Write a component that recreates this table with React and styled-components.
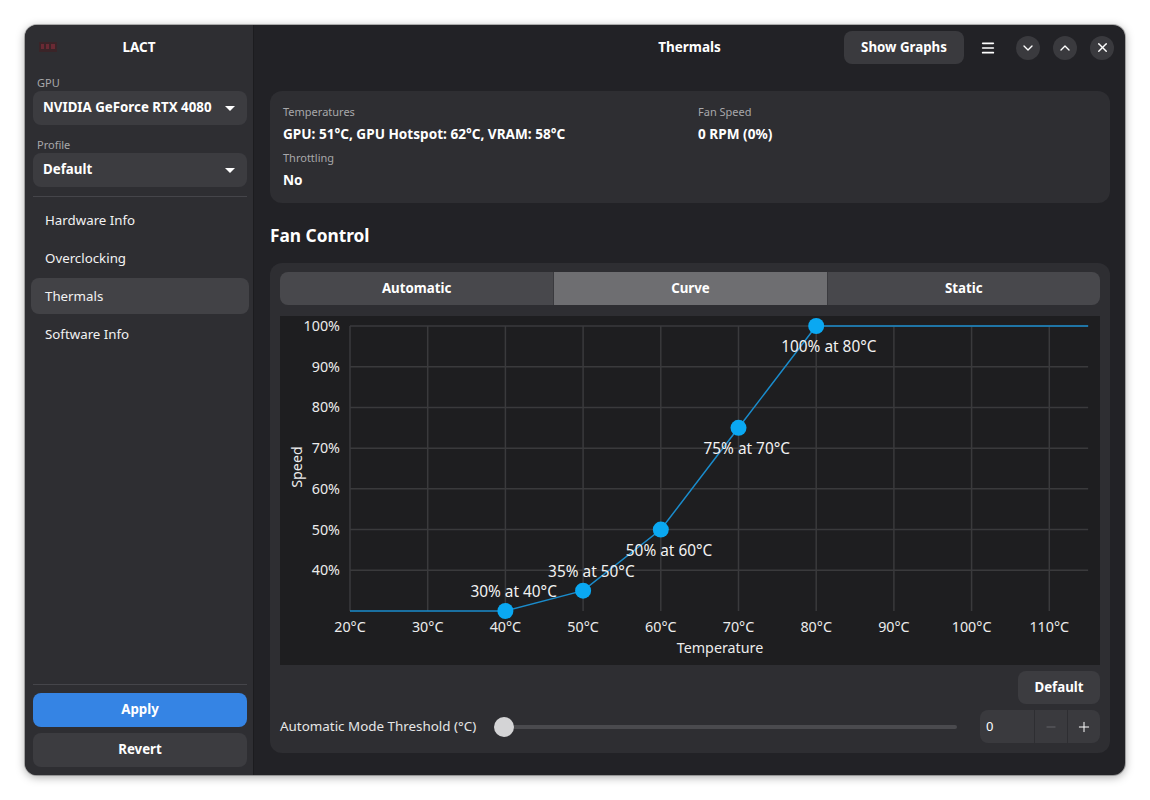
import React from 'react';
import styled, { createGlobalStyle } from 'styled-components';
import { ChevronDown, ChevronUp, X, Menu, Minus, Plus } from 'lucide-react';

const GlobalStyle = createGlobalStyle`
  html, body {
    margin: 0;
    padding: 0;
    background: #ffffff;
  }
  body {
    font-family: "Noto Sans", "Open Sans", sans-serif;
    color: #ffffff;
  }
  #root {
    padding: 25px;
  }
`

const Window = styled.div`
  width: 1100px;
  height: 750px;
  display: flex;
  border-radius: 12px;
  overflow: hidden;
  background: #222226;
  box-shadow: 0 2px 10px rgba(0, 0, 0, 0.35), 0 0 0 1px rgba(0, 0, 0, 0.25);
`

const Sidebar = styled.aside`
  width: 229px;
  flex-shrink: 0;
  display: flex;
  flex-direction: column;
  background: #2e2e32;
  border-right: 1px solid #1c1c1f;
  box-sizing: border-box;
`

const SideHeader = styled.div`
  height: 46px;
  display: flex;
  align-items: center;
  justify-content: center;
  position: relative;
  padding-bottom: 2px;
  box-sizing: border-box;
  font-size: 13.5px;
  font-weight: 700;
`

const Logo = styled.svg`
  position: absolute;
  left: 14px;
  top: 17px;
`

const SideSection = styled.div`
  padding: 4px 6px 0 8px;
  display: flex;
  flex-direction: column;
`

const FieldLabel = styled.div`
  font-size: 11px;
  color: #a8a8aa;
  height: 16px;
  line-height: 16px;
  padding-left: 4px;
  margin-top: ${p => p.$top || 0}px;
`

const Dropdown = styled.div`
  height: 34px;
  border-radius: 8px;
  background: #3c3c40;
  display: flex;
  align-items: center;
  justify-content: space-between;
  padding: 0 12px 2px 10px;
  box-sizing: border-box;
  font-size: 13.3px;
  font-weight: 700;
`

const Caret = styled.span`
  width: 0;
  height: 0;
  margin-top: 2px;
  border-left: 5px solid transparent;
  border-right: 5px solid transparent;
  border-top: 5px solid #ffffff;
`

const Separator = styled.div`
  height: 1px;
  background: #45454a;
  margin: ${p => p.$margin || '0'};
`

const NavList = styled.nav`
  display: flex;
  flex-direction: column;
  gap: 2px;
  padding: 5px 4px 0 6px;
`

const NavItem = styled.div`
  height: 36px;
  display: flex;
  align-items: center;
  padding-left: 14px;
  border-radius: 8px;
  font-size: 13.3px;
  color: #f2f2f2;
  background: ${p => (p.$active ? '#424246' : 'transparent')};
`

const Spacer = styled.div`
  flex: 1;
`

const SideFooter = styled.div`
  display: flex;
  flex-direction: column;
  gap: 6px;
  padding: 0 6px 8px 8px;
`

const WideButton = styled.button`
  height: 34px;
  border: none;
  border-radius: 8px;
  padding: 0 0 2px;
  font-family: inherit;
  font-size: 13.3px;
  font-weight: 700;
  color: #ffffff;
  background: ${p => (p.$primary ? '#3584e4' : '#3c3c40')};
`

const Main = styled.main`
  flex: 1;
  display: flex;
  flex-direction: column;
  min-width: 0;
`

const HeaderBar = styled.header`
  height: 46px;
  display: flex;
  align-items: center;
  justify-content: center;
  position: relative;
  font-size: 13.5px;
  font-weight: 700;
  padding-bottom: 2px;
  box-sizing: border-box;
`

const HeaderActions = styled.div`
  position: absolute;
  right: 11px;
  top: 6px;
  display: flex;
  align-items: center;
`

const PillButton = styled.div`
  height: 33px;
  width: 120px;
  border-radius: 8px;
  background: #3a3a3e;
  display: flex;
  align-items: center;
  justify-content: center;
  padding-bottom: 2px;
  box-sizing: border-box;
  font-size: 13.3px;
  font-weight: 700;
  margin-right: 12px;
`

const IconButton = styled.div`
  width: 24px;
  height: 24px;
  display: flex;
  align-items: center;
  justify-content: center;
  margin-right: 16px;
`

const CircleButton = styled.div`
  width: 24px;
  height: 24px;
  border-radius: 50%;
  background: #3a3a3e;
  display: flex;
  align-items: center;
  justify-content: center;
  margin-left: ${p => p.$gap || 0}px;
`

const Content = styled.div`
  padding: 20px 15px 0 16px;
  display: flex;
  flex-direction: column;
`

const Card = styled.section`
  background: #2e2e32;
  border-radius: 12px;
  padding: ${p => p.$pad || '13px'};
`

const InfoGrid = styled.div`
  display: grid;
  grid-template-columns: 415px 1fr;
`

const InfoBlock = styled.div`
  display: flex;
  flex-direction: column;
  margin-bottom: ${p => p.$bottom || 0}px;
`

const InfoLabel = styled.div`
  font-size: 11px;
  line-height: 16px;
  color: #a8a8aa;
`

const InfoValue = styled.div`
  font-size: 13.6px;
  font-weight: 700;
  line-height: 20px;
  margin-top: 4px;
`

const SectionTitle = styled.h2`
  margin: 22px 0 16px;
  font-size: 17.3px;
  line-height: 22px;
  font-weight: 700;
`

const Tabs = styled.div`
  display: grid;
  grid-template-columns: repeat(3, 1fr);
  height: 33px;
  border-radius: 8px;
  overflow: hidden;
  background: #48484c;
`

const Tab = styled.div`
  display: flex;
  align-items: center;
  justify-content: center;
  padding-bottom: 2px;
  font-size: 13.3px;
  font-weight: 700;
  background: ${p => (p.$active ? '#6e6e71' : 'transparent')};
  border-left: ${p => (p.$first ? 'none' : '1px solid #3a3a3e')};
`

const ChartBox = styled.div`
  margin-top: 11px;
  height: 349px;
  background: #1e1e20;
`

const DefaultRow = styled.div`
  display: flex;
  justify-content: flex-end;
  margin-top: 6px;
`

const SmallButton = styled.div`
  width: 82px;
  height: 33px;
  border-radius: 8px;
  background: #3c3c40;
  display: flex;
  align-items: center;
  justify-content: center;
  padding-bottom: 2px;
  box-sizing: border-box;
  font-size: 13.3px;
  font-weight: 700;
`

const ThresholdRow = styled.div`
  display: flex;
  align-items: center;
  margin-top: 6px;
  height: 33px;
`

const RowLabel = styled.div`
  font-size: 13.4px;
  color: #e6e6e6;
  width: 214px;
  padding-bottom: 2px;
`

const Slider = styled.div`
  position: relative;
  width: 463px;
  height: 4px;
  border-radius: 2px;
  background: #4a4a4e;
  margin-right: 23px;
`

const Knob = styled.div`
  position: absolute;
  left: 0;
  top: -8px;
  width: 20px;
  height: 20px;
  border-radius: 50%;
  background: #d4d4d6;
`

const SpinBox = styled.div`
  display: flex;
  height: 33px;
  width: 120px;
  border-radius: 8px;
  background: #3a3a3e;
  overflow: hidden;
  margin-left: auto;
`

const SpinEntry = styled.div`
  flex: 1;
  display: flex;
  align-items: center;
  padding: 0 0 2px 6px;
  font-size: 13px;
`

const SpinButton = styled.div`
  width: 32px;
  display: flex;
  align-items: center;
  justify-content: center;
  border-left: 1px solid #2e2e32;
  color: ${p => (p.$dim ? '#6a6a6e' : '#ffffff')};
`

const X0 = 70;
const XPER = 7.77;
const tx = t => X0 + (t - 20) * XPER;
const sy = s => 295 - ((s - 30) * 285) / 70;

const points = [
  { t: 40, s: 30, above: true },
  { t: 50, s: 35, above: true },
  { t: 60, s: 50 },
  { t: 70, s: 75 },
  { t: 80, s: 100 },
];

const FanChart = () => {
  const temps = [20, 30, 40, 50, 60, 70, 80, 90, 100, 110];
  const speeds = [40, 50, 60, 70, 80, 90, 100];
  const line = [
    `${tx(20)},${sy(30)}`,
    ...points.map(p => `${tx(p.t)},${sy(p.s)}`),
    `${tx(115)},${sy(100)}`,
  ].join(' ');

  return (
    <svg width="820" height="349" style={{ display: 'block' }}>
      {speeds.map(s => (
        <line key={s} x1={tx(20)} x2={tx(115)} y1={sy(s)} y2={sy(s)} stroke="#3a3a3c" strokeWidth="1.5" />
      ))}
      {temps.map(t => (
        <line key={t} x1={tx(t)} x2={tx(t)} y1={sy(100)} y2={sy(30)} stroke="#3a3a3c" strokeWidth="1.5" />
      ))}
      <g fill="#ececec" fontSize="14.3" fontFamily="Noto Sans, sans-serif">
        {speeds.map(s => (
          <text key={s} x="60" y={sy(s) + 5} textAnchor="end">{s}%</text>
        ))}
        {temps.map(t => (
          <text key={t} x={tx(t)} y="316" textAnchor="middle">{t}°C</text>
        ))}
        <text x="440" y="337" textAnchor="middle">Temperature</text>
        <text x="0" y="0" textAnchor="middle" transform="translate(22 151) rotate(-90)">Speed</text>
      </g>
      <polyline points={line} fill="none" stroke="#1a8ccc" strokeWidth="1.5" />
      {points.map(p => (
        <g key={p.t}>
          <circle cx={tx(p.t)} cy={sy(p.s)} r="8" fill="#0aa8f2" />
          <text
            x={tx(p.t) - 35}
            y={sy(p.s) + (p.above ? -14 : 26)}
            textAnchor="start"
            fill="#f2f2f2"
            fontSize="15.4"
            fontFamily="Noto Sans, sans-serif"
          >
            {p.s}% at {p.t}°C
          </text>
        </g>
      ))}
    </svg>
  );
};

const navItems = ['Hardware Info', 'Overclocking', 'Thermals', 'Software Info'];

export default function App() {
  return (
    <>
      <GlobalStyle />
      <Window>
        <Sidebar>
          <SideHeader>
            <Logo width="18" height="10" viewBox="0 0 18 10">
              <rect x="0" y="0" width="18" height="10" fill="#3a2428" />
              <rect x="2" y="2" width="3" height="5" fill="#6a2a34" />
              <rect x="7" y="2" width="3" height="5" fill="#6a2a34" />
              <rect x="12" y="2" width="4" height="5" fill="#6a2a34" />
            </Logo>
            LACT
          </SideHeader>
          <SideSection>
            <FieldLabel>GPU</FieldLabel>
            <Dropdown>
              NVIDIA GeForce RTX 4080
              <Caret />
            </Dropdown>
            <FieldLabel $top={12}>Profile</FieldLabel>
            <Dropdown>
              Default
              <Caret />
            </Dropdown>
            <Separator $margin="9px 0 0" />
          </SideSection>
          <NavList>
            {navItems.map(item => (
              <NavItem key={item} $active={item === 'Thermals'}>{item}</NavItem>
            ))}
          </NavList>
          <Spacer />
          <SideFooter>
            <Separator $margin="0 0 2px" />
            <WideButton $primary>Apply</WideButton>
            <WideButton>Revert</WideButton>
          </SideFooter>
        </Sidebar>

        <Main>
          <HeaderBar>
            Thermals
            <HeaderActions>
              <PillButton>Show Graphs</PillButton>
              <IconButton>
                <Menu size={16} strokeWidth={2.5} color="#ffffff" />
              </IconButton>
              <CircleButton>
                <ChevronDown size={16} strokeWidth={2} color="#ffffff" />
              </CircleButton>
              <CircleButton $gap={13}>
                <ChevronUp size={16} strokeWidth={2} color="#ffffff" />
              </CircleButton>
              <CircleButton $gap={13}>
                <X size={15} strokeWidth={2.2} color="#ffffff" />
              </CircleButton>
            </HeaderActions>
          </HeaderBar>

          <Content>
            <Card>
              <InfoGrid>
                <div>
                  <InfoBlock $bottom={6}>
                    <InfoLabel>Temperatures</InfoLabel>
                    <InfoValue>GPU: 51°C, GPU Hotspot: 62°C, VRAM: 58°C</InfoValue>
                  </InfoBlock>
                  <InfoBlock>
                    <InfoLabel>Throttling</InfoLabel>
                    <InfoValue>No</InfoValue>
                  </InfoBlock>
                </div>
                <InfoBlock>
                  <InfoLabel>Fan Speed</InfoLabel>
                  <InfoValue>0 RPM (0%)</InfoValue>
                </InfoBlock>
              </InfoGrid>
            </Card>

            <SectionTitle>Fan Control</SectionTitle>

            <Card $pad="9px 10px 10px">
              <Tabs>
                <Tab $first>Automatic</Tab>
                <Tab $active>Curve</Tab>
                <Tab>Static</Tab>
              </Tabs>
              <ChartBox>
                <FanChart />
              </ChartBox>
              <DefaultRow>
                <SmallButton>Default</SmallButton>
              </DefaultRow>
              <ThresholdRow>
                <RowLabel>Automatic Mode Threshold (°C)</RowLabel>
                <Slider>
                  <Knob />
                </Slider>
                <SpinBox>
                  <SpinEntry>0</SpinEntry>
                  <SpinButton $dim>
                    <Minus size={14} strokeWidth={1.5} />
                  </SpinButton>
                  <SpinButton>
                    <Plus size={16} strokeWidth={1.5} />
                  </SpinButton>
                </SpinBox>
              </ThresholdRow>
            </Card>
          </Content>
        </Main>
      </Window>
    </>
  );
}
